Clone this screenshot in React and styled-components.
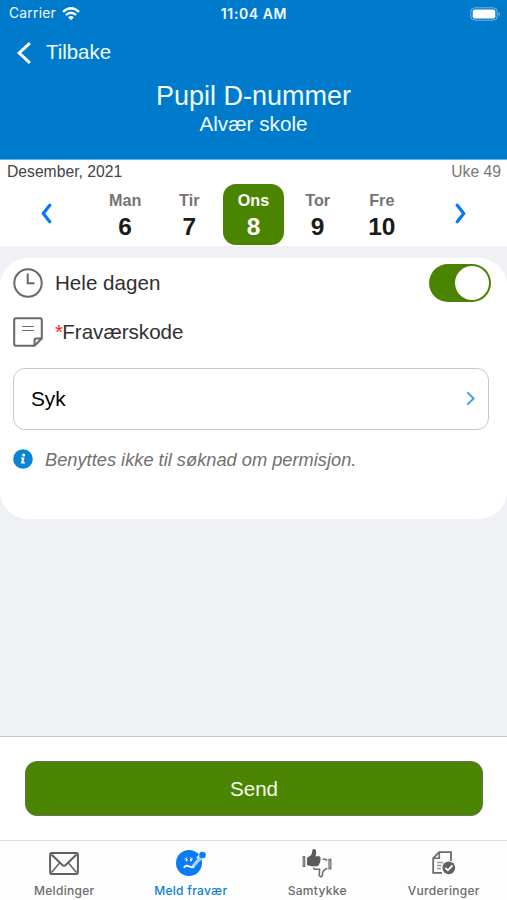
import styled, { createGlobalStyle } from 'styled-components';

const GlobalStyle = createGlobalStyle`
  * {
    box-sizing: border-box;
  }

  body {
    margin: 0;
    background: #eff1f5;
    font-family: 'Liberation Sans', Arial, sans-serif;
  }

  svg {
    display: block;
    flex-shrink: 0;
  }
`;

const Screen = styled.div`
  display: flex;
  flex-direction: column;
  width: 507px;
  height: 900px;
  overflow: hidden;
`;

const Header = styled.header`
  height: 160px;
  flex-shrink: 0;
  background: #007acb;
  border-bottom: 1px solid #5fb2ea;
  color: #f0faff;
`;

const StatusBar = styled.div`
  display: grid;
  grid-template-columns: 1fr auto 1fr;
  align-items: center;
  height: 27px;
  padding: 0 6px 0 9px;
  font-family: Inter, sans-serif;
  font-size: 13.8px;
  line-height: 27px;
`;

const Carrier = styled.div`
  display: flex;
  align-items: center;
  gap: 6px;
  letter-spacing: 0.25px;
`;

const Clock = styled.span`
  margin-right: 2px;
  font-size: 14px;
  font-weight: 600;
  letter-spacing: 0.6px;
`;

const BatterySlot = styled.div`
  display: flex;
  justify-content: flex-end;
`;

const BackButton = styled.button`
  display: flex;
  align-items: center;
  gap: 14px;
  height: 51px;
  padding: 0 0 0 17px;
  border: 0;
  background: none;
  color: inherit;
  font: 20.4px 'Liberation Sans', Arial, sans-serif;
`;

const Title = styled.h1`
  margin: 2px 0 0;
  font-size: 27px;
  font-weight: 400;
  line-height: 32px;
  text-align: center;
`;

const Subtitle = styled.div`
  font-size: 20.7px;
  line-height: 24px;
  text-align: center;
`;

const Calendar = styled.section`
  height: 86px;
  flex-shrink: 0;
  background: #fff;
`;

const CalendarHead = styled.div`
  display: flex;
  justify-content: space-between;
  height: 24px;
  padding: 0 6px 0 7px;
  color: #444;
  font-size: 15.7px;
  line-height: 24px;
`;

const Week = styled.span`
  color: #777;
`;

const Days = styled.div`
  display: grid;
  grid-template-columns: 93px repeat(5, 64.2px) 93px;
  height: 61px;
`;

const Arrow = styled.button`
  display: flex;
  align-items: center;
  justify-content: center;
  padding: 0 0 2px;
  border: 0;
  background: none;
`;

const Day = styled.div`
  width: 61px;
  height: 61px;
  margin: 0 auto;
  padding-top: 5px;
  border-radius: 13px;
  background: ${({ $active }) => ($active ? '#4b8400' : 'transparent')};
  color: ${({ $active }) => ($active ? '#fff' : '#1b1b1b')};
  font-weight: 700;
  text-align: center;
`;

const DayName = styled.div`
  color: ${({ $active }) => ($active ? '#fff' : '#757575')};
  font-size: 16.2px;
  line-height: 22px;
`;

const DayNumber = styled.div`
  font-size: 24.5px;
  line-height: 32px;
`;

const Card = styled.section`
  height: 261px;
  margin-top: 12px;
  flex-shrink: 0;
  border-radius: 28px;
  background: #fff;
`;

const Row = styled.div`
  display: flex;
  align-items: center;
  gap: 12px;
  height: ${({ $height }) => $height}px;
  padding: 0 16px 0 13px;
  color: #303030;
  font-size: 20.6px;
`;

const Required = styled.span`
  color: #f22;
`;

const Label = styled.span`
  flex: 1;

  ${Required} {
    letter-spacing: -0.8px;
  }
`;

const Toggle = styled.div`
  display: flex;
  justify-content: flex-end;
  width: 62px;
  height: 38px;
  padding: 2px;
  border-radius: 19px;
  background: #4b8400;
`;

const Knob = styled.div`
  width: 34px;
  height: 34px;
  border-radius: 50%;
  background: #fff;
`;

const Select = styled.div`
  display: flex;
  align-items: center;
  justify-content: space-between;
  height: 62px;
  margin: 12px 18px 0 13px;
  padding: 0 13px 0 17px;
  border: 1.5px solid #c8c8c8;
  border-radius: 12px;
  color: #000;
  font-size: 20.8px;

  svg {
    margin-bottom: 2px;
  }
`;

const Hint = styled.div`
  display: flex;
  align-items: center;
  gap: 12px;
  height: 59px;
  padding-left: 13px;
  color: #707070;
  font-size: 18.25px;
  font-style: italic;

  svg {
    margin-bottom: 2px;
  }
`;

const Footer = styled.div`
  height: 104px;
  margin-top: auto;
  padding: 24px 24px 0 25px;
  flex-shrink: 0;
  border-top: 1px solid #c4c5c8;
  background: #fff;
`;

const SendButton = styled.button`
  width: 100%;
  height: 55px;
  border: 1px solid #68705f;
  border-radius: 12px;
  background: #4b8400;
  color: #f4fff0;
  font: 20.6px 'Liberation Sans', Arial, sans-serif;
`;

const TabBar = styled.nav`
  display: grid;
  grid-template-columns: repeat(4, 1fr);
  height: 60px;
  padding-left: 1px;
  flex-shrink: 0;
  border-top: 1px solid #dedede;
  background: #fdfdfd;
`;

const Tab = styled.div`
  display: flex;
  flex-direction: column;
  align-items: center;
  gap: 1px;
  padding-top: 5px;
  color: ${({ $active }) => ($active ? '#0b7fd6' : '#6b6b6b')};
  font-family: Inter, sans-serif;
  font-size: 12px;
  font-weight: 500;
  letter-spacing: 0.3px;
  line-height: 20px;
`;

const TabIcon = styled.div`
  display: flex;
  align-items: center;
  justify-content: center;
  height: 34px;
`;

function WifiIcon() {
  return (
    <svg width="18" height="14" viewBox="0 0 18 14" fill="none" stroke="#fff">
      <path d="M1 4.8Q9-2.2 17 4.8" strokeWidth="2.3" />
      <path d="M3.9 8Q9 3.5 14.1 8" strokeWidth="2.2" />
      <path d="M6.1 10.2Q9 7.9 11.9 10.2L9 13.2Z" fill="#fff" stroke="none" />
    </svg>
  );
}

function BatteryIcon() {
  return (
    <svg width="31" height="14" viewBox="0 0 31 14">
      <rect x="0.8" y="0.8" width="26.4" height="12.4" rx="4" fill="none" stroke="#72b6e8" />
      <rect x="2.7" y="2.5" width="22.6" height="9" rx="2" fill="#fff" />
      <path d="M28.6 4.7Q31.4 7 28.6 9.3Z" fill="#72b6e8" />
    </svg>
  );
}

function Chevron({ left, width, height, color, stroke, round }) {
  const inset = stroke * 0.7;
  const tip = left ? inset : width - inset;
  const end = left ? width - inset : inset;
  return (
    <svg width={width} height={height} fill="none" stroke={color} strokeWidth={stroke}>
      <path
        d={`M${end} ${inset}L${tip} ${height / 2}L${end} ${height - inset}`}
        strokeLinecap={round ? 'round' : 'butt'}
        strokeLinejoin={round ? 'round' : 'miter'}
      />
    </svg>
  );
}

function ClockIcon() {
  return (
    <svg width="30" height="30" viewBox="0 0 30 30" fill="none" stroke="#686868">
      <circle cx="15" cy="15" r="13.7" strokeWidth="2" />
      <path d="M14.7 5.5V15.3H21.5" strokeWidth="2" />
    </svg>
  );
}

function NoteIcon() {
  return (
    <svg width="30" height="30" viewBox="0 0 30 30" fill="none" stroke="#686868" strokeWidth="2">
      <path d="M3 1.2H27Q28.8 1.2 28.8 3V21.5L21.5 28.8H3Q1.2 28.8 1.2 27V3Q1.2 1.2 3 1.2Z" />
      <path d="M21.5 28.5V23Q21.5 21.5 23 21.5H28.5" />
      <path d="M9 9.5H21M9 13.5H21" strokeWidth="1.2" />
    </svg>
  );
}

function InfoIcon() {
  return (
    <svg width="20" height="20" viewBox="0 0 20 20">
      <circle cx="10" cy="10" r="9.8" fill="#0785d6" />
      <circle cx="10.6" cy="5.9" r="1.5" fill="#fff" />
      <path d="M8.1 8.5H11.5L10.6 13H11.9V14.5H8L8.9 10H8.1Z" fill="#fff" />
    </svg>
  );
}

function MailIcon() {
  return (
    <svg width="30" height="23" viewBox="0 0 30 23" fill="none" stroke="#606060">
      <rect x="1.1" y="1.1" width="27.8" height="20.8" rx="1.3" strokeWidth="2" />
      <path d="M2.5 2.5L13 12.8Q15 14.6 17 12.8L27.5 2.5" strokeWidth="2" />
      <path d="M2.5 20.5L10.5 11M27.5 20.5L19.5 11" strokeWidth="1.5" />
    </svg>
  );
}

function SickIcon() {
  return (
    <svg width="30" height="28" viewBox="0 0 30 28" fill="none">
      <circle cx="13" cy="14" r="13" fill="#087bf5" />
      <path d="M20.5 8.5L24 4.5L27.5 8L23.5 12Z" fill="#fdfdfd" />
      <path d="M17 17.5L25.3 7.6" stroke="#a5d2fc" strokeWidth="3.4" />
      <circle cx="26.5" cy="6" r="3.3" fill="#087bf5" />
      <path d="M8.5 10.2L11.3 8.5M14.2 8.5L17 10.2" stroke="#d8ecff" strokeWidth="1" />
      <path d="M10.6 9.7V12.2M14.9 9.7V12.2" stroke="#fff" strokeWidth="1.7" />
      <path d="M8 18.8Q9.5 15.6 12.5 17.2T18 17.8" stroke="#fff" strokeWidth="1.9" />
    </svg>
  );
}

function ThumbsIcon() {
  return (
    <svg width="30" height="30" viewBox="0 0 30 30" fill="none">
      <path
        d="M5 9.7L9 7.2Q10.3 4.5 10.4 1.7Q12.2.1 13.8 2Q14.7 4.3 13.6 8.2H17.5Q19.2 8.9 18.4 10.8Q19.2 12.1 18.2 13.3Q18.6 14.8 17.4 15.6Q17.4 17.8 15 18.2H10Q7 18 5 17Z"
        fill="#5c5c5c"
      />
      <path d="M1.2 8.7H2.7V18.3H1.2Z" stroke="#707070" strokeWidth="1.2" />
      <path
        d="M20.5 11.3H23.5L25 12.7M25.3 20.2Q21.8 21.5 20.7 24.2L20.2 27.8Q18.5 29.9 17.2 27.2L17.6 21.2H12.8Q11 20.6 12 19.6"
        stroke="#707070"
        strokeWidth="1.6"
      />
      <path d="M27 11.5H28.8V20.8H27Z" stroke="#707070" strokeWidth="1.3" />
    </svg>
  );
}

function GradesIcon() {
  return (
    <svg width="24" height="24" viewBox="0 0 24 24" fill="none" stroke="#6b6b6b">
      <path d="M19 10V1.2H7.2L1.2 7.2V21.8H10" strokeWidth="1.8" />
      <path d="M7.3 1.5V7.3H1.5" strokeWidth="1.6" />
      <path d="M5 11.5H11M5 14.5H9.5M5 17.5H9" stroke="#999" strokeWidth="1.5" />
      <circle cx="16.8" cy="16.8" r="6.4" fill="#606060" stroke="none" />
      <path d="M13.3 16.8L15.9 19.3L20.5 14.4" stroke="#fff" strokeWidth="1.8" />
    </svg>
  );
}

const days = [
  { name: 'Man', number: 6 },
  { name: 'Tir', number: 7 },
  { name: 'Ons', number: 8, active: true },
  { name: 'Tor', number: 9 },
  { name: 'Fre', number: 10 },
];

const tabs = [
  { label: 'Meldinger', icon: <MailIcon /> },
  { label: 'Meld fravær', icon: <SickIcon />, active: true },
  { label: 'Samtykke', icon: <ThumbsIcon /> },
  { label: 'Vurderinger', icon: <GradesIcon /> },
];

export default function App() {
  return (
    <Screen>
      <GlobalStyle />
      <Header>
        <StatusBar>
          <Carrier>
            Carrier
            <WifiIcon />
          </Carrier>
          <Clock>11:04 AM</Clock>
          <BatterySlot>
            <BatteryIcon />
          </BatterySlot>
        </StatusBar>
        <BackButton>
          <Chevron left width={15} height={24} color="#fff" stroke={3} />
          Tilbake
        </BackButton>
        <Title>Pupil D-nummer</Title>
        <Subtitle>Alvær skole</Subtitle>
      </Header>

      <Calendar>
        <CalendarHead>
          <span>Desember, 2021</span>
          <Week>Uke 49</Week>
        </CalendarHead>
        <Days>
          <Arrow>
            <Chevron left round width={11} height={21} color="#0878fb" stroke={3.2} />
          </Arrow>
          {days.map(({ name, number, active }) => (
            <Day key={name} $active={active}>
              <DayName $active={active}>{name}</DayName>
              <DayNumber>{number}</DayNumber>
            </Day>
          ))}
          <Arrow>
            <Chevron round width={11} height={21} color="#0878fb" stroke={3.2} />
          </Arrow>
        </Days>
      </Calendar>

      <Card>
        <Row $height={50}>
          <ClockIcon />
          <Label>Hele dagen</Label>
          <Toggle>
            <Knob />
          </Toggle>
        </Row>
        <Row $height={48}>
          <NoteIcon />
          <Label>
            <Required>*</Required>Fraværskode
          </Label>
        </Row>
        <Select>
          Syk
          <Chevron width={9} height={15} color="#3b9ddd" stroke={1.9} />
        </Select>
        <Hint>
          <InfoIcon />
          Benyttes ikke til søknad om permisjon.
        </Hint>
      </Card>

      <Footer>
        <SendButton>Send</SendButton>
      </Footer>
      <TabBar>
        {tabs.map(({ label, icon, active }) => (
          <Tab key={label} $active={active}>
            <TabIcon>{icon}</TabIcon>
            {label}
          </Tab>
        ))}
      </TabBar>
    </Screen>
  );
}
